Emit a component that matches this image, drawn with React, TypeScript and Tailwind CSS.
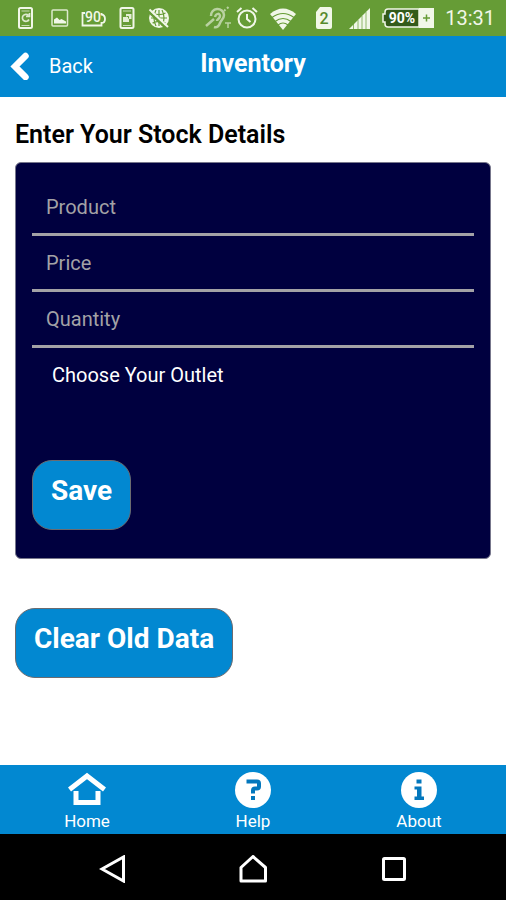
import React, { useState } from "react";

function StatusBar() {
  return (
    <div className="flex h-9 items-center justify-between bg-[#669c36] pl-[17px] pr-[11px] text-[#f1f7e8]">
      <div className="flex items-center">
        <svg className="mr-4 h-6 w-[18px]" viewBox="0 0 18 24" fill="none" stroke="currentColor">
          <rect x="2" y="2" width="13" height="20" rx="1.500" strokeWidth="2" />
          <path d="M4.500 5h8M4.500 19.500h8" strokeWidth="1" opacity=".7" />
          <path d="M11.500 9.500a3.500 3.500 0 1 0 .5 4M12.500 7v3.500H9" strokeWidth="1.700" opacity=".85" />
        </svg>
        <svg className="mr-3 h-5 w-[18px]" viewBox="0 0 18 20">
          <rect x="1" y="2" width="15.500" height="16" rx="1" fill="none" stroke="currentColor" strokeWidth="1.500" opacity=".85" />
          <path d="M3 15.500v-4l3-2 2.500 2.500 2-1 4.500 2.500v2z" fill="currentColor" />
        </svg>
        <svg className="mr-3 h-6 w-[26px]" viewBox="0 0 26 24">
          <path d="M4 7H1.500v12.500H20.500v-2.500Q24 17 24 13T20.500 8.500V7" fill="none" stroke="currentColor" strokeWidth="1.800" />
          <text x="12" y="15.500" textAnchor="middle" fontSize="14" fontWeight="500" fontFamily="Roboto, sans-serif" fill="currentColor">90</text>
        </svg>
        <svg className="mr-3 h-6 w-4" viewBox="0 0 16 24">
          <rect x="1.500" y="2" width="13" height="20" rx="1.500" fill="none" stroke="currentColor" strokeWidth="2" />
          <path d="M4 5h8M4 19.500h8" stroke="currentColor" opacity=".7" />
          <path d="M7 8h5.500v5H10v3H4v-5h3z" fill="currentColor" opacity=".9" />
          <path d="M7.500 10.500h2v2" fill="none" stroke="#669c36" strokeWidth="1" />
        </svg>
        <svg className="h-6 w-6" viewBox="0 0 24 24" fill="none">
          <circle cx="12" cy="12" r="10" fill="currentColor" />
          <path d="M12 4v16M4 12h16M5.500 7c4 2 9 2 13 0M5.500 17c4-2 9-2 13 0M9 4c-2.500 5-2.500 11 0 16M15 4c2.500 5 2.500 11 0 16" stroke="#669c36" strokeWidth="1.200" />
          <path d="M1 5 20 23" stroke="#669c36" strokeWidth="2.500" />
          <path d="M2.500 3.500 21 21" stroke="currentColor" strokeWidth="2" />
        </svg>
      </div>
      <div className="flex items-center">
        <svg className="mr-1 h-6 w-[26px] opacity-60" viewBox="0 0 26 24" fill="none" stroke="currentColor" strokeWidth="2.500">
          <path d="M6 10a6.500 6.500 0 0 1 13-1c0 4-3 5-4 8s-3 5-6 4" />
          <path d="M10 11c1-4 5-4 5-1s-3 3-3 5M1 20l8-7" />
          <path d="M19 5l1.500-1.500M22 2.500l1.500-1.500" strokeWidth="2" />
          <path d="M20 17h6M23 17v5" strokeWidth="1.500" />
        </svg>
        <svg className="mr-2.5 h-6 w-6" viewBox="0 0 24 24" fill="none" stroke="currentColor" strokeWidth="2">
          <circle cx="12" cy="13" r="8.500" />
          <path d="M12 8v5l3.500 3M2 6l4.500-4M22 6l-4.500-4" />
        </svg>
        <svg className="mr-[18px] h-6 w-7" viewBox="0 0 28 24">
          <path d="M14 24 1 8q13-11 26 0z" fill="currentColor" />
          <path d="M3 11.500q11-8 22 0M6 15.500q8-6 16 0M9 19q5-4 10 0" fill="none" stroke="#669c36" strokeWidth="1.200" />
        </svg>
        <svg className="mr-4 h-6 w-[18px]" viewBox="0 0 18 24">
          <path d="M5 1h10q2 0 2 2v18q0 2-2 2H3q-2 0-2-2V6z" fill="currentColor" />
          <text x="9" y="18" textAnchor="middle" fontSize="16" fontWeight="500" fontFamily="Roboto, sans-serif" fill="#568a2b">2</text>
        </svg>
        <svg className="mr-2.5 h-6 w-[22px]" viewBox="0 0 22 24">
          <path d="M0 23 21 2v21z" fill="currentColor" />
          <path d="M4.500 18v5M9 14v9M13 10v13M17 6v17" stroke="#669c36" strokeWidth="1" opacity=".7" />
        </svg>
        <svg className="mr-2.5 h-6 w-[54px]" viewBox="0 0 54 24">
          <path d="M38 3H7Q4 3 4 6v2H2v8h2v2q0 3 3 3h31z" fill="#335b1a" stroke="currentColor" strokeWidth="1.500" />
          <rect x="38" y="2" width="15" height="20" fill="currentColor" />
          <path d="M42 12h7M45.500 8.500v7" stroke="#669c36" strokeWidth="1.500" />
          <text x="21" y="17" textAnchor="middle" fontSize="14" fontWeight="700" fontFamily="Roboto, sans-serif" fill="white">90%</text>
        </svg>
        <span className="text-xl leading-9">13:31</span>
      </div>
    </div>
  );
}

function Field({ label }: { label: string }) {
  return (
    <div className="h-14 border-b-[3px] border-[#a3a2a6]">
      <input
        aria-label={label}
        placeholder={label}
        className="h-full w-full bg-transparent px-[14px] text-xl text-white outline-none placeholder:text-[#a3a2a6]"
      />
    </div>
  );
}

const actionButton =
  "block h-[70px] rounded-[20px] border border-[#6b6b70] bg-[#0288d1] px-[18px] pb-[9px] text-[28px] leading-8 font-bold text-white";

function Tab({ label, children }: { label: string; children: React.ReactNode }) {
  return (
    <a href="#" className="flex flex-1 flex-col items-center pt-[6px] text-[17px] leading-6">
      <svg className="h-[38px] w-[38px]" viewBox="0 0 38 38">{children}</svg>
      {label}
    </a>
  );
}

export default function App() {
  const [outlet, setOutlet] = useState("");
  return (
    <div className="flex min-h-screen flex-col bg-white font-['Roboto',sans-serif]">
      <StatusBar />
      <header className="grid h-[61px] grid-cols-3 items-center bg-[#0288d1] pb-0.5 text-white">
        <button className="flex items-center gap-5 pl-[10px] text-left text-xl">
          <svg className="h-7 w-[19px]" viewBox="0 0 19 28" fill="none" stroke="currentColor" strokeWidth="6.500">
            <path d="M15.500 4 5 14.500 15.500 25" strokeLinecap="round" />
          </svg>
          Back
        </button>
        <h1 className="pb-1 text-center text-[25px] leading-8 font-bold">Inventory</h1>
      </header>

      <main className="flex-1 px-[15px] pt-[22px]">
        <h2 className="mb-[11px] text-[25px] leading-8 font-semibold text-black">Enter Your Stock Details</h2>
        <form
          onSubmit={(e) => e.preventDefault()}
          className="mb-[49px] rounded-md border border-[#77778c] bg-[#00003f] px-4 pt-[17px] pb-7"
        >
          <Field label="Product" />
          <Field label="Price" />
          <Field label="Quantity" />
          <select
            aria-label="Outlet"
            value={outlet}
            onChange={(e) => setOutlet(e.target.value)}
            className="mb-[58px] block h-[54px] w-full appearance-none bg-transparent px-5 text-xl text-white outline-none"
          >
            <option value="">Choose Your Outlet</option>
          </select>
          <button type="submit" className={actionButton}>Save</button>
        </form>
        <button type="button" className={actionButton}>Clear Old Data</button>
      </main>

      <nav className="flex h-[69px] bg-[#0288d1] px-1 text-white">
        <Tab label="Home">
          <path d="M1.500 18.500 19 5l17.500 13.500" fill="none" stroke="currentColor" strokeWidth="5" />
          <path d="M8 20v11.500h22V20" fill="none" stroke="currentColor" strokeWidth="5" />
        </Tab>
        <Tab label="Help">
          <circle cx="19" cy="19" r="18" fill="currentColor" />
          <path d="M12.500 10.500H23q2 0 2 2v3q0 2-2 2h-2q-2 0-2 2v3" fill="none" stroke="#0277bd" strokeWidth="4" />
          <path d="M17 25h4v4h-4z" fill="#0277bd" />
        </Tab>
        <Tab label="About">
          <circle cx="19" cy="19" r="18" fill="currentColor" />
          <path d="M16.500 8.500h5v4h-5zM14.500 15.500h7v10H24V29h-9.500v-3.500H17v-7h-2.500z" fill="#0277bd" />
        </Tab>
      </nav>

      <div className="flex h-[66px] items-center justify-center gap-28 bg-black pt-1 text-white">
        <button aria-label="System back">
          <svg className="h-7 w-7" viewBox="0 0 28 28" fill="none" stroke="currentColor" strokeWidth="3">
            <path d="M24.500 2v24L3 14z" />
          </svg>
        </button>
        <button aria-label="System home">
          <svg className="h-7 w-7" viewBox="0 0 28 28" fill="none" stroke="currentColor" strokeWidth="3">
            <path d="M2 26V12.500L14 1.500l12.500 11V26z" strokeLinejoin="round" />
          </svg>
        </button>
        <button aria-label="Recent apps">
          <svg className="h-7 w-7" viewBox="0 0 28 28" fill="none" stroke="currentColor" strokeWidth="3">
            <rect x="4.500" y="3.500" width="21" height="21" rx="1" />
          </svg>
        </button>
      </div>
    </div>
  );
}
